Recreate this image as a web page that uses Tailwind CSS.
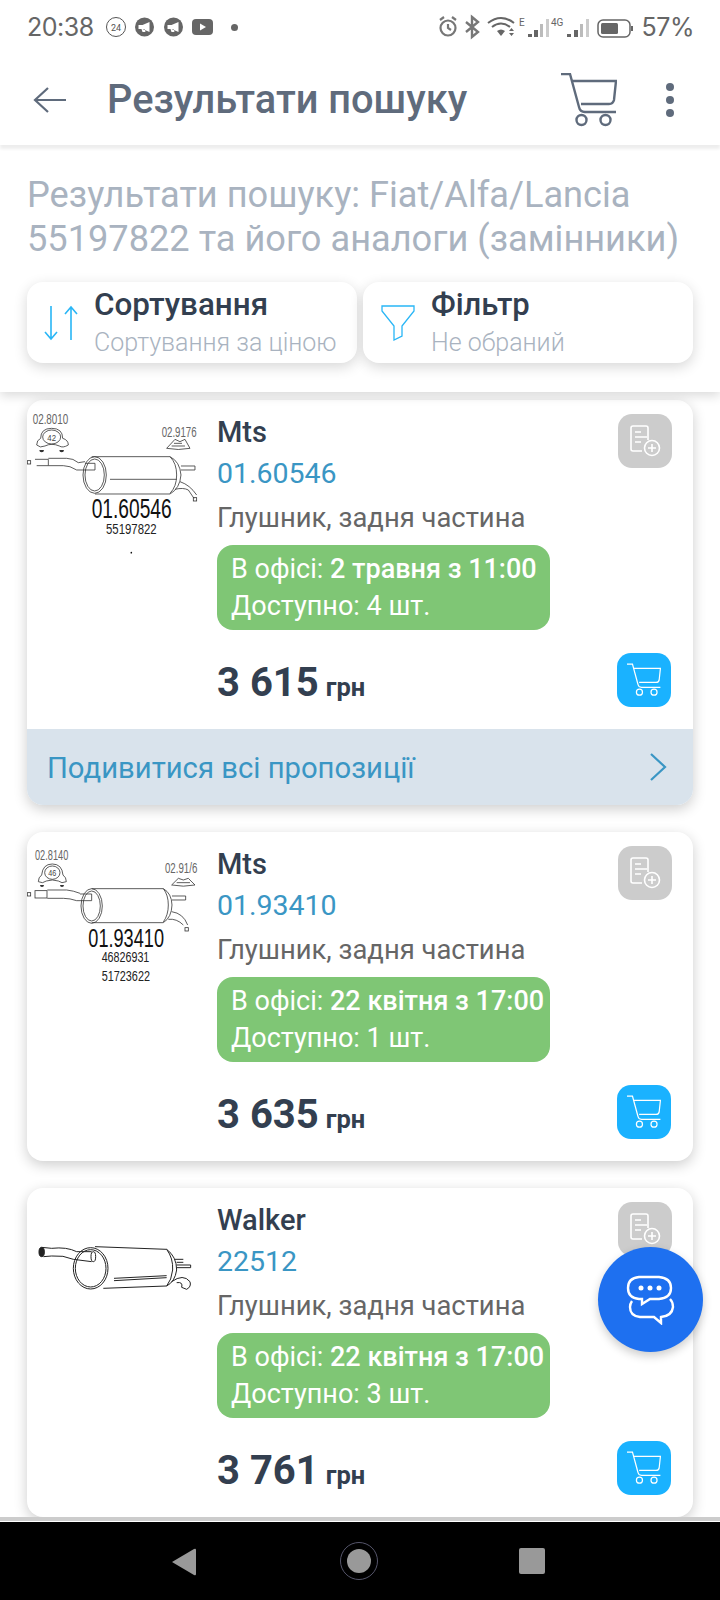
<!doctype html>
<html lang="uk"><head><meta charset="utf-8"><script src="https://cdn.jsdelivr.net/npm/@tailwindcss/browser@4"></script></head>
<body class="m-0 bg-white">
<div class="relative w-[720px] h-[1600px] overflow-hidden bg-white flex flex-col font-['Roboto',sans-serif]">

<!-- status bar -->
<div class="h-[50px] shrink-0 flex items-center pl-[27px] pr-[26px] pt-[4px] text-[#666]">
  <span class="text-[25px] leading-none font-['Inter',sans-serif] w-[78px] tracking-[-0.5px]">20:38</span>
  <svg width="110" height="24" viewBox="0 0 110 24">
    <circle cx="11" cy="12" r="9.500" fill="none" stroke="#555" stroke-width="1"/>
    <text x="11" y="15.500" text-anchor="middle" font-size="9" font-family="Roboto" fill="#555">24</text>
    <circle cx="39.500" cy="12" r="9.500" fill="#666"/><path d="M33.500 10h4l7-3v10l-7-3h-4z M36.500 14l1 3h3l-1-3z" fill="#fff"/>
    <circle cx="68.500" cy="12" r="9.500" fill="#666"/><path d="M62.500 10h4l7-3v10l-7-3h-4z M65.500 14l1 3h3l-1-3z" fill="#fff"/>
    <rect x="87" y="4" width="21" height="16" rx="4" fill="#666"/><path d="M95 8.500l6 3.500-6 3.500z" fill="#fff"/>
  </svg>
  <span class="ml-[16px] w-[7px] h-[7px] rounded-full bg-[#666]"></span>
  <svg class="ml-auto" width="196" height="28" viewBox="0 0 196 28">
    <g fill="none" stroke="#777" stroke-width="2.200"><circle cx="10" cy="15" r="7.500"/><path d="M10 11v4l3 2"/><path d="M2 7l4-3M18 7l-4-3"/></g>
    <path d="M34 4l6 5-6 5 6 5-6 5zM34 14l-6-5M34 14l-6 5" fill="none" stroke="#777" stroke-width="2.400"/>
    <g fill="none" stroke="#666" stroke-width="2"><path d="M50 10q13-10 26 0"/><path d="M54 14q9-7 18 0"/></g>
    <path d="M59 18q4-3 8 0l-4 5z" fill="#666"/>
    <path d="M71 18l2.500-3 2.500 3zM71 20l2.500 3 2.500-3z" fill="#666"/>
    <text x="81" y="13" font-size="10" font-family="Roboto" fill="#666">E</text>
    <rect x="90" y="21" width="4" height="3" fill="#666"/><rect x="96" y="17" width="4" height="7" fill="#666"/><rect x="102" y="11" width="3" height="13" fill="#bbb"/><rect x="108" y="6" width="3" height="18" fill="#ccc"/>
    <text x="113" y="13" font-size="10" font-family="Roboto" fill="#666">4G</text>
    <rect x="129" y="21" width="4" height="3" fill="#666"/><rect x="136" y="17" width="4" height="7" fill="#666"/><rect x="142" y="11" width="3" height="13" fill="#bbb"/><rect x="148" y="6" width="3" height="18" fill="#ccc"/>
    <rect x="160" y="7" width="32" height="17" rx="5" fill="none" stroke="#666" stroke-width="1.500"/>
    <rect x="163" y="10" width="17" height="11" rx="1.500" fill="#666"/><rect x="193" y="13" width="2" height="5" fill="#666"/>
  </svg>
  <span class="ml-[8px] text-[25px] leading-none font-['Inter',sans-serif] tracking-[-0.5px]">57%</span>
</div>

<!-- app bar -->
<div class="relative z-20 h-[95px] shrink-0 flex items-center bg-white pt-[4px] shadow-[0_4px_3px_rgba(0,0,0,0.07)]">
  <svg class="ml-[33px]" width="34" height="28" viewBox="0 0 34 28" fill="none" stroke="#5f6b7c" stroke-width="2.200"><path d="M33 14H2M15 2L2 14l13 12"/></svg>
  <h1 class="ml-[40px] text-[39.800px] leading-none font-medium text-[#5f6b7c]">Результати пошуку</h1>
  <svg class="ml-auto mr-[49px]" width="56" height="54" viewBox="0 0 56 54" fill="none" stroke="#5f6b7c" stroke-width="2.400"><path d="M0 1h9l9 33q1 5 6 5h31"/><path d="M11 8h44l-2 19q-1 4-5 4H20"/><circle cx="20.500" cy="47" r="5"/><circle cx="44.500" cy="47" r="5"/></svg>
  <div class="mr-[46px] flex flex-col gap-[5px]"><span class="w-[8px] h-[8px] rounded-full bg-[#5f6b7c]"></span><span class="w-[8px] h-[8px] rounded-full bg-[#5f6b7c]"></span><span class="w-[8px] h-[8px] rounded-full bg-[#5f6b7c]"></span></div>
</div>

<!-- search panel -->
<div class="relative z-10 h-[247px] shrink-0 bg-white px-[27px] pt-[28px] shadow-[0_4px_10px_rgba(0,0,0,0.14)]">
  <p class="text-[36.200px] leading-[44px] text-[#a9b3c0] whitespace-nowrap">Результати пошуку: Fiat/Alfa/Lancia<br>55197822 та його аналоги (замінники)</p>
  <div class="mt-[21px] flex gap-[6px]">
    <div class="w-[330px] h-[81px] rounded-[16px] bg-white shadow-[0_4px_14px_rgba(0,0,0,0.16)] flex items-center">
      <svg class="ml-[17px]" width="34" height="36" viewBox="0 0 34 36" fill="none" stroke="#29b6f6" stroke-width="1.600"><path d="M7 1v33M1 27l6 7 6-7"/><path d="M27 35V2M21 9l6-7 6 7"/></svg>
      <div class="ml-[16px]"><div class="text-[31.400px] leading-[32px] font-medium text-[#333f50]">Сортування</div><div class="mt-[8px] text-[25px] leading-[28px] font-light text-[#a9b3c0] whitespace-nowrap">Сортування за ціною</div></div>
    </div>
    <div class="w-[330px] h-[81px] rounded-[16px] bg-white shadow-[0_4px_14px_rgba(0,0,0,0.16)] flex items-center">
      <svg class="ml-[17px]" width="36" height="36" viewBox="0 0 36 36" fill="none" stroke="#29b6f6" stroke-width="1.300"><path d="M2 1h32v5L22 21v10l-8 4V21L2 6z"/></svg>
      <div class="ml-[15px]"><div class="text-[31px] leading-[32px] font-medium text-[#333f50]">Фільтр</div><div class="mt-[8px] text-[25px] leading-[28px] font-light text-[#a9b3c0]">Не обраний</div></div>
    </div>
  </div>
</div>

<!-- list -->
<div class="flex-1 min-h-0 overflow-hidden px-[27px] pt-[8px] flex flex-col gap-[27px]">

  <!-- card 1 -->
  <div class="w-[666px] h-[405px] shrink-0 rounded-[16px] bg-white shadow-[0_4px_14px_rgba(0,0,0,0.2)] overflow-hidden">
    <div class="h-[329px] relative flex">
      <div class="w-[190px] shrink-0 relative">
        <svg width="190" height="170" viewBox="0 0 190 170" class="absolute left-0 top-0 font-['Liberation_Sans']">
          <g transform="translate(-7 0) scale(0.3333)">
            <text x="38" y="72" font-size="46" fill="#666" textLength="107" lengthAdjust="spacingAndGlyphs">02.8010</text>
            <text x="425" y="112" font-size="46" fill="#666" textLength="105" lengthAdjust="spacingAndGlyphs">02.9176</text>
            <text x="82" y="122" font-size="28" fill="#444" textLength="26" lengthAdjust="spacingAndGlyphs">42</text>
            <g fill="none" stroke="#333" stroke-width="2.400">
              <path d="M50 135Q50 120 62 115Q62 85 95 85Q128 85 128 115Q145 120 145 135Q128 145 118 138Q95 128 75 138Q60 145 50 135z"/>
              <ellipse cx="95" cy="111" rx="27" ry="21"/>
              <path d="M440 145L465 118L480 125L495 118L510 145Q475 152 440 145z"/><path d="M455 138h40M462 130h24"/>
              <rect x="22" y="182" width="10" height="10"/>
              <path d="M45 178H85V197H50M85 175H140Q160 175 175 188L195 185M85 197H130Q150 197 170 210H225V190H195"/>
              <ellipse cx="224" cy="225" rx="35" ry="55"/><ellipse cx="224" cy="225" rx="29" ry="48"/>
              <path d="M215 170H450Q480 185 483 225Q480 265 450 282H225"/>
              <path d="M450 170Q470 190 470 225Q470 260 450 280M270 238H470"/>
              <path d="M483 198H525V210H483"/>
              <path d="M480 245Q510 255 530 285M465 268Q490 262 505 270L522 295"/>
              <rect x="520" y="293" width="10" height="10"/>
            </g>
            <path d="M58 150a7 7 0 0 0 14 0zM118 150a7 7 0 0 0 14 0z" fill="#333"/>
            <text x="215" y="355" font-size="84" fill="#111" textLength="240" lengthAdjust="spacingAndGlyphs">01.60546</text>
            <text x="258" y="402" font-size="46" fill="#222" textLength="152" lengthAdjust="spacingAndGlyphs">55197822</text>
            <circle cx="334" cy="458" r="2.500" fill="#111"/>
          </g>
        </svg>
      </div>
      <div class="pt-[14px]">
        <div class="text-[29px] leading-[36px] font-medium text-[#333f50]">Mts</div>
        <div class="mt-[6px] text-[28.500px] leading-[36px] text-[#3a96c4]">01.60546</div>
        <div class="mt-[8px] text-[27.400px] leading-[36px] text-[#666]">Глушник, задня частина</div>
        <div class="mt-[9px] w-[333px] h-[85px] rounded-[16px] bg-[#7fc675] text-white text-[27px] leading-[37px] px-[14px] py-[6px] whitespace-nowrap">В офісі: <b class="font-medium">2 травня з 11:00</b><br>Доступно: 4 шт.</div>
        <div class="mt-[29px] font-bold text-[#333f50] text-[40px] leading-[48px]">3 615 <span class="text-[25.500px] -ml-[3px]">грн</span></div>
      </div>
      <div class="absolute left-[591px] top-[14px] w-[54px] h-[54px] rounded-[14px] bg-[#ccc] flex items-center justify-center">
        <svg width="34" height="34" viewBox="0 0 34 34" fill="none" stroke="#fff" stroke-width="1.600"><path d="M14 27H5q-2 0-2-2V4q0-2 2-2h13q2 0 2 2v12"/><path d="M7 8h6M7 13h12M7 18h6"/><circle cx="24" cy="24" r="7.500"/><path d="M24 20v8M20 24h8"/></svg>
      </div>
      <div class="absolute left-[590px] top-[253px] w-[54px] h-[54px] rounded-[14px] bg-[#1ab2ff] flex items-center justify-center">
        <svg width="34" height="34" viewBox="0 0 56 54" fill="none" stroke="#fff" stroke-width="2"><path d="M0 1h9l9 33q1 5 6 5h31"/><path d="M11 8h44l-2 19q-1 4-5 4H20"/><circle cx="20.500" cy="47" r="5"/><circle cx="44.500" cy="47" r="5"/></svg>
      </div>
    </div>
    <div class="h-[76px] bg-[#d9e3ec] flex items-center pl-[20px] text-[29.250px] text-[#3a96c4]"><span class="mt-[3px]">Подивитися всі пропозиції</span>
      <svg class="ml-auto mr-[26px]" width="18" height="28" viewBox="0 0 18 28" fill="none" stroke="#3a96c4" stroke-width="2.200"><path d="M2 1l14 13L2 27"/></svg>
    </div>
  </div>

  <!-- card 2 -->
  <div class="w-[666px] h-[329px] shrink-0 rounded-[16px] bg-white shadow-[0_4px_14px_rgba(0,0,0,0.2)] relative flex">
    <div class="w-[190px] shrink-0 relative">
      <svg width="190" height="170" viewBox="0 0 190 170" class="absolute left-0 top-0 font-['Liberation_Sans']">
        <g transform="translate(-7 -2) scale(0.3333)">
          <text x="45" y="90" font-size="46" fill="#666" textLength="100" lengthAdjust="spacingAndGlyphs">02.8140</text>
          <text x="435" y="128" font-size="46" fill="#666" textLength="97" lengthAdjust="spacingAndGlyphs">02.91/6</text>
          <text x="85" y="138" font-size="28" fill="#444" textLength="24" lengthAdjust="spacingAndGlyphs">46</text>
          <g fill="none" stroke="#333" stroke-width="2.400">
            <path d="M55 155Q55 142 65 135Q68 102 97 102Q126 102 129 135Q139 142 139 155Q125 162 115 153Q97 147 79 153Q68 162 55 155z"/>
            <ellipse cx="97" cy="128" rx="23" ry="20"/>
            <path d="M455 165L475 145L490 150L505 145L525 165Q490 172 455 165z"/><path d="M470 158h40"/>
            <rect x="22" y="188" width="10" height="10"/><rect x="45" y="182" width="36" height="22"/>
            <path d="M82 180H140Q160 182 180 190M82 205H130Q150 205 170 212H215V192H180"/>
            <ellipse cx="215" cy="228" rx="32" ry="52"/><ellipse cx="215" cy="228" rx="26" ry="45"/>
            <path d="M215 176H430Q455 190 456 225Q455 262 430 278H215"/>
            <path d="M430 176Q445 195 445 225Q445 255 430 276"/>
            <path d="M456 198H497V210H456"/>
            <path d="M455 245Q490 250 503 285M445 268Q470 265 490 285"/>
            <rect x="495" y="293" width="10" height="10"/>
          </g>
          <path d="M60 165a6 6 0 0 0 12 0zM120 165a6 6 0 0 0 12 0z" fill="#333"/>
          <text x="205" y="350" font-size="80" fill="#111" textLength="227" lengthAdjust="spacingAndGlyphs">01.93410</text>
          <text x="245" y="395" font-size="46" fill="#222" textLength="143" lengthAdjust="spacingAndGlyphs">46826931</text>
          <text x="245" y="452" font-size="46" fill="#222" textLength="145" lengthAdjust="spacingAndGlyphs">51723622</text>
        </g>
      </svg>
    </div>
    <div class="pt-[14px]">
      <div class="text-[29px] leading-[36px] font-medium text-[#333f50]">Mts</div>
      <div class="mt-[6px] text-[28.500px] leading-[36px] text-[#3a96c4]">01.93410</div>
      <div class="mt-[8px] text-[27.400px] leading-[36px] text-[#666]">Глушник, задня частина</div>
      <div class="mt-[9px] w-[333px] h-[85px] rounded-[16px] bg-[#7fc675] text-white text-[27px] leading-[37px] px-[14px] py-[6px] whitespace-nowrap">В офісі: <b class="font-medium">22 квітня з 17:00</b><br>Доступно: 1 шт.</div>
      <div class="mt-[29px] font-bold text-[#333f50] text-[40px] leading-[48px]">3 635 <span class="text-[25.500px] -ml-[3px]">грн</span></div>
    </div>
    <div class="absolute left-[591px] top-[14px] w-[54px] h-[54px] rounded-[14px] bg-[#ccc] flex items-center justify-center">
      <svg width="34" height="34" viewBox="0 0 34 34" fill="none" stroke="#fff" stroke-width="1.600"><path d="M14 27H5q-2 0-2-2V4q0-2 2-2h13q2 0 2 2v12"/><path d="M7 8h6M7 13h12M7 18h6"/><circle cx="24" cy="24" r="7.500"/><path d="M24 20v8M20 24h8"/></svg>
    </div>
    <div class="absolute left-[590px] top-[253px] w-[54px] h-[54px] rounded-[14px] bg-[#1ab2ff] flex items-center justify-center">
      <svg width="34" height="34" viewBox="0 0 56 54" fill="none" stroke="#fff" stroke-width="2"><path d="M0 1h9l9 33q1 5 6 5h31"/><path d="M11 8h44l-2 19q-1 4-5 4H20"/><circle cx="20.500" cy="47" r="5"/><circle cx="44.500" cy="47" r="5"/></svg>
    </div>
  </div>

  <!-- card 3 -->
  <div class="w-[666px] h-[329px] shrink-0 rounded-[16px] bg-white shadow-[0_4px_14px_rgba(0,0,0,0.2)] relative flex">
    <div class="w-[190px] shrink-0 relative">
      <svg width="190" height="120" viewBox="0 0 190 120" class="absolute left-0 top-0">
        <g transform="translate(-7 12) scale(0.3333)" fill="none" stroke="#222" stroke-width="3">
          <ellipse cx="65" cy="156" rx="8" ry="14" fill="#222"/>
          <path d="M65 142L95 145Q140 140 170 155L215 155M70 170L95 168Q130 165 160 178L215 185"/>
          <ellipse cx="220" cy="170" rx="7" ry="15"/>
          <ellipse cx="212" cy="205" rx="52" ry="62"/><ellipse cx="212" cy="205" rx="46" ry="56"/>
          <path d="M225 140L440 148Q470 170 470 210Q465 245 440 258L250 265"/>
          <path d="M440 148Q460 175 458 210Q455 240 440 258"/>
          <path d="M282 235L440 227M282 242L440 233"/>
          <path d="M465 178H490M470 187H490M470 195H512V203H470"/>
          <path d="M455 245Q490 220 510 245Q515 260 500 268L485 262Q490 245 470 248"/>
        </g>
      </svg>
    </div>
    <div class="pt-[14px]">
      <div class="text-[29px] leading-[36px] font-medium text-[#333f50]">Walker</div>
      <div class="mt-[6px] text-[28.500px] leading-[36px] text-[#3a96c4]">22512</div>
      <div class="mt-[8px] text-[27.400px] leading-[36px] text-[#666]">Глушник, задня частина</div>
      <div class="mt-[9px] w-[333px] h-[85px] rounded-[16px] bg-[#7fc675] text-white text-[27px] leading-[37px] px-[14px] py-[6px] whitespace-nowrap">В офісі: <b class="font-medium">22 квітня з 17:00</b><br>Доступно: 3 шт.</div>
      <div class="mt-[29px] font-bold text-[#333f50] text-[40px] leading-[48px]">3 761 <span class="text-[25.500px] -ml-[3px]">грн</span></div>
    </div>
    <div class="absolute left-[591px] top-[14px] w-[54px] h-[54px] rounded-[14px] bg-[#ccc] flex items-center justify-center">
      <svg width="34" height="34" viewBox="0 0 34 34" fill="none" stroke="#fff" stroke-width="1.600"><path d="M14 27H5q-2 0-2-2V4q0-2 2-2h13q2 0 2 2v12"/><path d="M7 8h6M7 13h12M7 18h6"/><circle cx="24" cy="24" r="7.500"/><path d="M24 20v8M20 24h8"/></svg>
    </div>
    <div class="absolute left-[590px] top-[253px] w-[54px] h-[54px] rounded-[14px] bg-[#1ab2ff] flex items-center justify-center">
      <svg width="34" height="34" viewBox="0 0 56 54" fill="none" stroke="#fff" stroke-width="2"><path d="M0 1h9l9 33q1 5 6 5h31"/><path d="M11 8h44l-2 19q-1 4-5 4H20"/><circle cx="20.500" cy="47" r="5"/><circle cx="44.500" cy="47" r="5"/></svg>
    </div>
  </div>
</div>

<div class="relative z-20 h-[4px] shrink-0 bg-[#ccc]"></div>
<div class="relative z-20 h-px shrink-0 bg-white"></div>

<!-- nav bar -->
<div class="relative z-20 h-[78px] shrink-0 bg-black flex items-center">
  <svg class="absolute left-[171px] top-[25px]" width="26" height="30" viewBox="0 0 26 30"><path d="M1 15L23 2q2-1 2 1v24q0 2-2 1z" fill="#999"/></svg>
  <div class="absolute left-[340px] top-[20px] w-[38px] h-[38px] rounded-full border border-[#55556a] flex items-center justify-center"><span class="w-[24px] h-[24px] rounded-full bg-[#999]"></span></div>
  <div class="absolute left-[519px] top-[26px] w-[26px] h-[26px] rounded-[2px] bg-[#999]"></div>
</div>

<!-- chat FAB -->
<div class="absolute z-30 left-[598px] top-[1247px] w-[105px] h-[105px] rounded-full bg-[#1e70f0] flex items-center justify-center shadow-[0_4px_10px_rgba(0,0,0,0.2)]">
  <svg width="50" height="50" viewBox="0 0 50 50" fill="none" stroke="#fff" stroke-width="2.400"><path d="M6 26q-2 3-2 6 0 9 10 10h14l7 6v-6q11-1 12-10 0-5-3-8"/><path d="M13 2h20q12 1 12 11 0 10-12 11H24l-8 5v-5h-3Q2 23 2 13 2 3 13 2z" fill="#1e70f0"/><circle cx="15" cy="13" r="2.500" fill="#fff" stroke="none"/><circle cx="24" cy="13" r="2.500" fill="#fff" stroke="none"/><circle cx="33" cy="13" r="2.500" fill="#fff" stroke="none"/></svg>
</div>
</div>
</body></html>
